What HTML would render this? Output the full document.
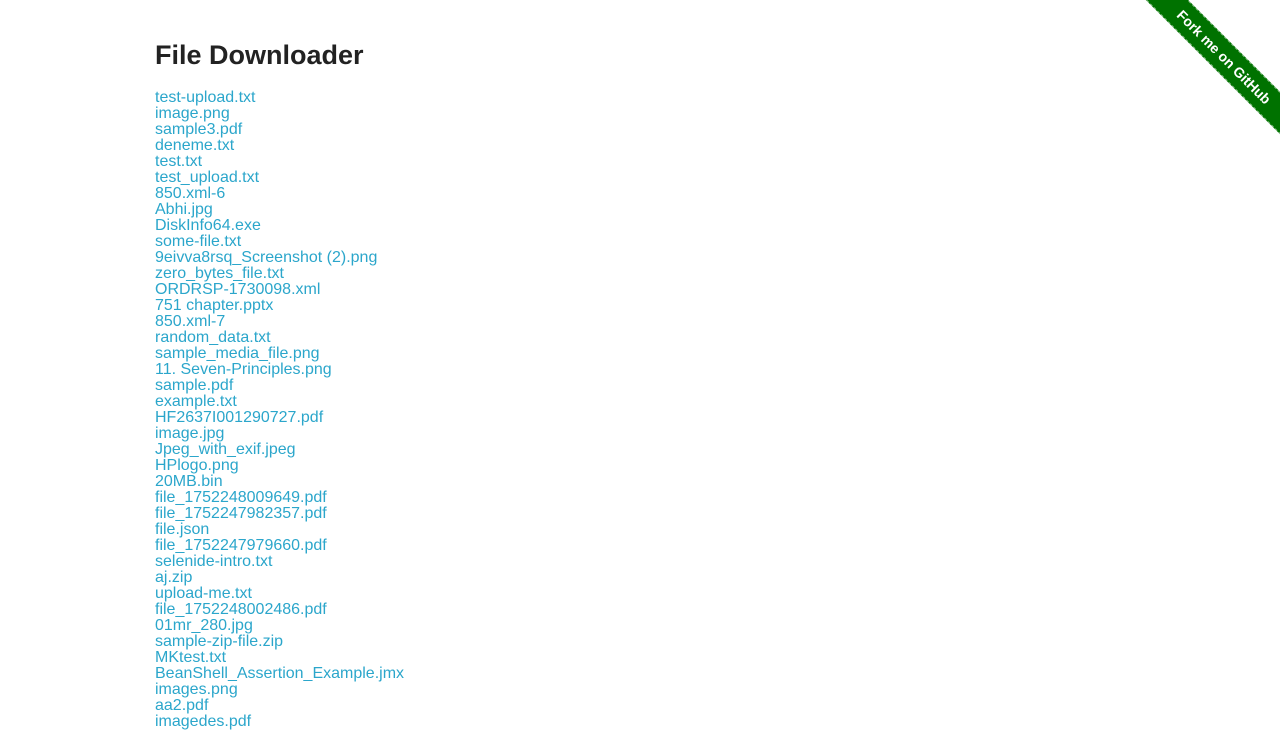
<!DOCTYPE html>
<html><head><meta charset="utf-8"><style>
body{margin:0;background:#fff;font-family:"Liberation Sans",Arial,sans-serif;overflow:hidden;width:1280px;height:720px;position:relative}
.c{position:absolute;left:155px;top:0}
h3{font-size:27px;font-weight:bold;color:#222;margin:0;position:absolute;top:39px;left:0;white-space:nowrap;line-height:32px}
.l{position:absolute;top:90px;left:0;white-space:nowrap}
.l a{display:block;color:#2ba6cb;text-decoration:none;font-size:16px;line-height:16px;height:16px}
.rib{position:absolute;left:1099px;top:42px;width:250px;height:30px;background:#007200;transform:rotate(45deg);color:#fff;font-size:14px;font-weight:bold;text-align:center;line-height:28px;border-top:1px dashed rgba(255,255,255,.5);border-bottom:1px dashed rgba(255,255,255,.5);box-sizing:border-box}
</style></head><body>
<div class="c"><h3>File Downloader</h3>
<div class="l">
<a>test-upload.txt</a><a>image.png</a><a>sample3.pdf</a><a>deneme.txt</a><a>test.txt</a><a>test_upload.txt</a><a>850.xml-6</a><a>Abhi.jpg</a><a>DiskInfo64.exe</a><a>some-file.txt</a><a>9eivva8rsq_Screenshot (2).png</a><a>zero_bytes_file.txt</a><a>ORDRSP-1730098.xml</a><a>751 chapter.pptx</a><a>850.xml-7</a><a>random_data.txt</a><a>sample_media_file.png</a><a>11. Seven-Principles.png</a><a>sample.pdf</a><a>example.txt</a><a>HF2637I001290727.pdf</a><a>image.jpg</a><a>Jpeg_with_exif.jpeg</a><a>HPlogo.png</a><a>20MB.bin</a><a>file_1752248009649.pdf</a><a>file_1752247982357.pdf</a><a>file.json</a><a>file_1752247979660.pdf</a><a>selenide-intro.txt</a><a>aj.zip</a><a>upload-me.txt</a><a>file_1752248002486.pdf</a><a>01mr_280.jpg</a><a>sample-zip-file.zip</a><a>MKtest.txt</a><a>BeanShell_Assertion_Example.jmx</a><a>images.png</a><a>aa2.pdf</a><a>imagedes.pdf</a>
</div></div>
<div class="rib">Fork me on GitHub</div>
</body></html>
